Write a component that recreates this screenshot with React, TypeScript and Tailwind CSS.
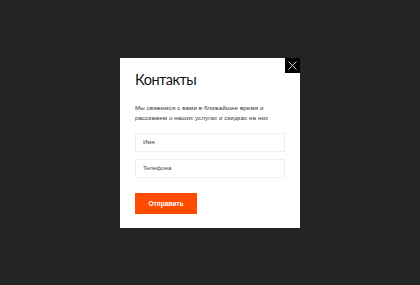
export default function App() {
  return (
    <div
      className="w-[420px] h-[285px] bg-[#242424] flex items-start justify-center pt-[58px]"
      style={{ fontFamily: '"Liberation Sans", Arial, sans-serif' }}
    >
      <div className="relative w-[180px] h-[170px] bg-white px-[15px] pt-[13px]">
        <button className="absolute top-0 right-0 w-[15px] h-[15px] bg-black flex items-center justify-center">
          <svg width="9" height="9" viewBox="0 0 9 9" stroke="#e5e5e5" strokeWidth="0.9">
            <path d="M0.5 0.5L8.5 8.5M8.5 0.5L0.5 8.5" />
          </svg>
        </button>
        <h1 className="font-['Lato',sans-serif] text-[14.5px] leading-[18px] tracking-[-0.5px] text-[#111]">Контакты</h1>
        <p className="mt-[14px] text-[6.2px] leading-[10px] text-[#333] tracking-[0.1px]">
          Мы свяжемся с вами в ближайшее время и
          <br />
          расскажем о наших услугах и скидках на них
        </p>
        <div className="mt-[10px] flex flex-col gap-[7px]">
          <div className="h-[19px] border border-[#efefef] flex items-center px-[7px] text-[6px] text-[#444]">
            Имя
          </div>
          <div className="h-[19px] border border-[#efefef] flex items-center px-[7px] text-[6px] text-[#444]">
            Телефона
          </div>
        </div>
        <button className="mt-[15px] w-[62px] h-[21px] bg-[#ff4b00] text-white text-[6.5px] font-bold flex items-center justify-center">
          Отправить
        </button>
      </div>
    </div>
  );
}
